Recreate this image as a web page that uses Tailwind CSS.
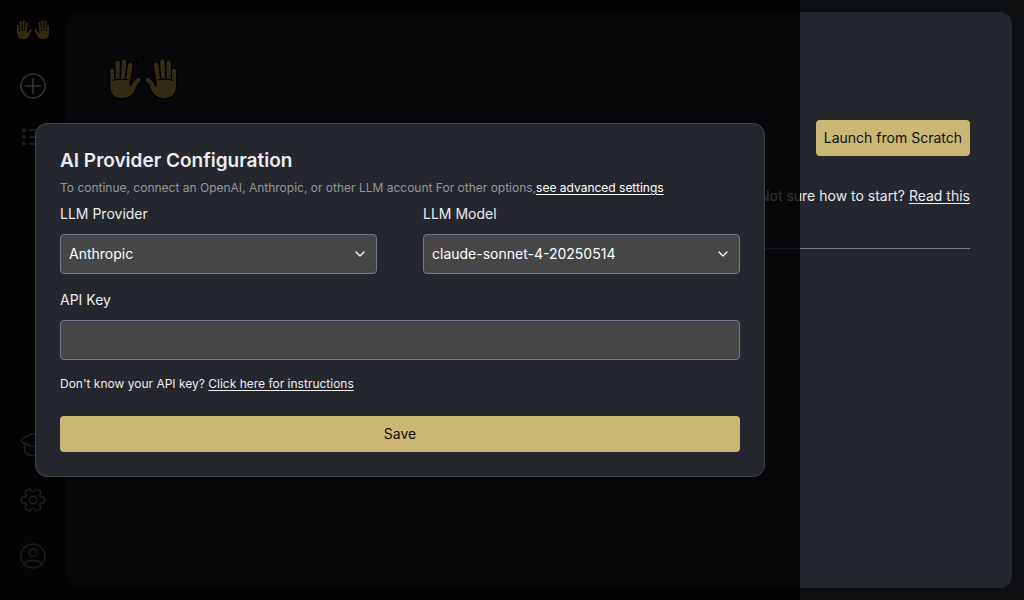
<!DOCTYPE html>
<html lang="en">
<head>
<meta charset="utf-8">
<meta name="viewport" content="width=device-width, initial-scale=1">
<title>AI Provider Configuration</title>
<script src="https://cdn.jsdelivr.net/npm/@tailwindcss/browser@4"></script>
</head>
<body class="relative min-h-screen bg-[#0f1011] font-['Inter',sans-serif] text-sm text-[#ececee]">
<svg class="hidden" aria-hidden="true">
  <defs>
    <g id="hand-shape" stroke-linecap="round" stroke-linejoin="round">
      <path fill="none" d="M67 93L68 140M83 68L82 135M102 64L98 135M121 74L112 135M146 120Q138 125 133 134Q128 145 120 147"/>
      <path d="M68 124Q90 120 110 124L114 148Q124 148 133 138Q124 168 97 168Q66 168 68 135Z"/>
    </g>
    <g id="hand">
      <use href="#hand-shape" stroke="#000" stroke-width="20"/>
      <use href="#hand-shape" stroke="#ffdc6b" stroke-width="13" fill="#ffdc6b"/>
      <path d="M70 121Q88 115 115 119M75 90L75 114M93 74L91 112M111 78L106 113" fill="none" stroke="#000" stroke-width="3.500" stroke-linecap="round"/>
    </g>
    <symbol id="hands" viewBox="54 39 210 144">
      <use href="#hand"/>
      <use href="#hand" transform="matrix(-1 0 0 1 319 0)"/>
      <path d="M137 54L146 68M158 43V60M182 54L173 68" stroke="#000" stroke-width="5" stroke-linecap="round"/>
    </symbol>
    <path id="gear-tooth" d="M21.100 9.900C21.600 10.800 22.500 11 23.400 11Q25.700 11 25.700 14Q25.700 17 23.400 17C22.500 17 21.600 17.200 21.100 18.100"/>
  </defs>
</svg>

<div class="flex min-h-screen">
  <nav class="flex w-[66px] shrink-0 flex-col items-center justify-between pt-[17px] pb-[30px] text-[#8a90a0]" aria-label="Main">
    <div class="flex flex-col items-center">
      <a href="#" aria-label="Home"><svg class="h-6 w-[34px]" aria-hidden="true"><use href="#hands"/></svg></a>
      <button type="button" class="mt-[31px] text-[#f0f0f0]" aria-label="New">
        <svg class="size-7" viewBox="0 0 28 28" fill="none" stroke="currentColor" stroke-width="1.700" stroke-linecap="round"><circle cx="14" cy="14" r="12"/><path d="M14 6.500V21.500M6.500 14H21.500"/></svg>
      </button>
      <button type="button" class="mt-6" aria-label="List">
        <svg class="size-7" viewBox="0 0 28 28" fill="none" stroke="currentColor" stroke-width="2" stroke-linecap="round"><path d="M11 6H24M11 13H24M11 20H24"/><path d="M5 6h.01M5 13h.01M5 20h.01" stroke-width="4"/></svg>
      </button>
    </div>
    <div class="flex flex-col items-center gap-7">
      <button type="button" aria-label="Learn">
        <svg class="size-7" viewBox="0 0 28 28" fill="none" stroke="currentColor" stroke-width="1.500" stroke-linejoin="round" stroke-linecap="round"><path d="M3.500 8.500L12 4Q14 3 16 4L24.500 8.500Q27 10.500 24.500 12.500L16 16.200Q14 17 12 16.200L3.500 12.500Q.500 10.500 3.500 8.500Z"/><path d="M5.500 14V20Q5.500 22.500 8 24Q14 27.500 20 24Q22.500 22.500 22.500 20V14"/></svg>
      </button>
      <button type="button" aria-label="Settings">
        <svg class="size-7" viewBox="0 0 28 28" fill="none" stroke="currentColor" stroke-width="1.500" stroke-linecap="round"><circle cx="14" cy="14" r="3.700"/><use href="#gear-tooth"/><use href="#gear-tooth" transform="rotate(60 14 14)"/><use href="#gear-tooth" transform="rotate(120 14 14)"/><use href="#gear-tooth" transform="rotate(180 14 14)"/><use href="#gear-tooth" transform="rotate(240 14 14)"/><use href="#gear-tooth" transform="rotate(300 14 14)"/></svg>
      </button>
      <button type="button" aria-label="Account">
        <svg class="size-7" viewBox="0 0 28 28" fill="none" stroke="currentColor" stroke-width="1.500"><circle cx="14" cy="14" r="12"/><circle cx="14" cy="10.700" r="3.700"/><path d="M5.500 21.500Q8 18.500 14 18.500Q20 18.500 22.500 21.500"/></svg>
      </button>
    </div>
  </nav>

  <main class="my-3 mr-3 grow rounded-xl bg-[#25272f] px-[42px] pt-[41px]">
    <svg class="h-12 w-[70px]" role="img" aria-label="Raised hands"><use href="#hands"/></svg>
    <div class="mt-[19px] flex justify-end">
      <button type="button" class="h-9 rounded bg-[#c9b773] px-2 text-[#111]">Launch from Scratch</button>
    </div>
    <p class="mt-[30px] text-right leading-5">Not sure how to start? <a href="#" class="underline underline-offset-2">Read this</a></p>
    <hr class="mt-[42px] border-[#717a8f]">
  </main>
</div>

<div class="absolute inset-y-0 left-0 flex w-[800px] max-w-full items-center justify-center bg-black/80">
  <form role="dialog" aria-labelledby="dialog-title" class="w-full max-w-[730px] rounded-xl border border-[#464646] bg-[#25272f] p-6">
    <h1 id="dialog-title" class="text-[19px]/[26px] font-semibold">AI Provider Configuration</h1>
    <p class="mt-1.5 text-xs/4 text-[#96979b]">To continue, connect an OpenAI, Anthropic, or other LLM account For other options,<a href="#" class="text-white underline underline-offset-2">see advanced settings</a></p>
    <div class="mt-2 grid grid-cols-2 gap-[46px]">
      <div>
        <label for="provider" class="block leading-5">LLM Provider</label>
        <div class="relative mt-2.5">
          <select id="provider" class="h-10 w-full appearance-none rounded border border-[#717a8f] bg-[#464646] px-2 text-white"><option>Anthropic</option></select>
          <svg class="pointer-events-none absolute top-3 right-[9px] size-4" viewBox="0 0 16 16" fill="none" stroke="#fff" stroke-width="1.300" stroke-linecap="round" stroke-linejoin="round"><path d="M4 6L8 10L12 6"/></svg>
        </div>
      </div>
      <div>
        <label for="model" class="block leading-5">LLM Model</label>
        <div class="relative mt-2.5">
          <select id="model" class="h-10 w-full appearance-none rounded border border-[#717a8f] bg-[#464646] px-2 text-white"><option>claude-sonnet-4-20250514</option></select>
          <svg class="pointer-events-none absolute top-3 right-[9px] size-4" viewBox="0 0 16 16" fill="none" stroke="#fff" stroke-width="1.300" stroke-linecap="round" stroke-linejoin="round"><path d="M4 6L8 10L12 6"/></svg>
        </div>
      </div>
    </div>
    <label for="key" class="mt-4 block leading-5">API Key</label>
    <input id="key" type="password" class="mt-2.5 block h-10 w-full rounded border border-[#717a8f] bg-[#464646] px-2 text-white">
    <p class="mt-4 text-xs/4">Don't know your API key? <a href="#" class="underline underline-offset-2">Click here for instructions</a></p>
    <button type="submit" class="mt-6 block h-9 w-full rounded bg-[#c9b773] text-[#111]">Save</button>
  </form>
</div>
</body>
</html>
